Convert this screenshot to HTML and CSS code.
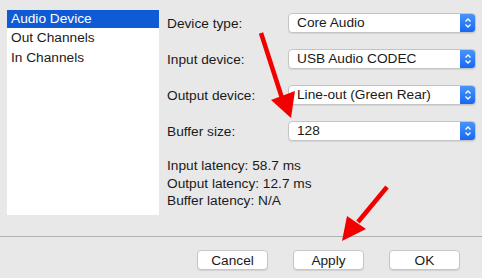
FILE: index.html
```html
<!DOCTYPE html>
<html lang="en">
<head>
    <meta charset="UTF-8">
    <title>Audio Settings</title>
    <link rel="stylesheet" href="styles.css">
</head>
<body>
    <div class="window">
        <div class="main">
            <ul class="side-list">
                <li class="selected">Audio Device</li>
                <li>Out Channels</li>
                <li>In Channels</li>
            </ul>

            <div class="settings">
                <div class="row">
                    <span class="label">Device type:</span>
                    <div class="select"><span class="value">Core Audio</span><span class="stepper"><svg width="8" height="12" viewBox="0 0 8 12"><path d="M1.5 4.5 L4 2 L6.5 4.5 M1.5 7.5 L4 10 L6.5 7.5" fill="none" stroke="#fff" stroke-width="1.3"/></svg></span></div>
                </div>
                <div class="row">
                    <span class="label">Input device:</span>
                    <div class="select"><span class="value">USB Audio CODEC</span><span class="stepper"><svg width="8" height="12" viewBox="0 0 8 12"><path d="M1.5 4.5 L4 2 L6.5 4.5 M1.5 7.5 L4 10 L6.5 7.5" fill="none" stroke="#fff" stroke-width="1.3"/></svg></span></div>
                </div>
                <div class="row">
                    <span class="label">Output device:</span>
                    <div class="select"><span class="value">Line-out (Green Rear)</span><span class="stepper"><svg width="8" height="12" viewBox="0 0 8 12"><path d="M1.5 4.5 L4 2 L6.5 4.5 M1.5 7.5 L4 10 L6.5 7.5" fill="none" stroke="#fff" stroke-width="1.3"/></svg></span></div>
                </div>
                <div class="row">
                    <span class="label">Buffer size:</span>
                    <div class="select"><span class="value">128</span><span class="stepper"><svg width="8" height="12" viewBox="0 0 8 12"><path d="M1.5 4.5 L4 2 L6.5 4.5 M1.5 7.5 L4 10 L6.5 7.5" fill="none" stroke="#fff" stroke-width="1.3"/></svg></span></div>
                </div>

                <div class="latency">
                    <p>Input latency: 58.7 ms</p>
                    <p>Output latency: 12.7 ms</p>
                    <p>Buffer latency: N/A</p>
                </div>
            </div>
        </div>

        <div class="footer">
            <button class="btn">Cancel</button>
            <button class="btn">Apply</button>
            <button class="btn">OK</button>
        </div>

        <!-- annotation arrows drawn over the dialog -->
        <svg class="arrows" width="482" height="278" viewBox="0 0 482 278">
            <line x1="261" y1="33" x2="282" y2="98" stroke="#f20000" stroke-width="4.5"/>
            <polygon points="271,100 295,91 291,118" fill="#f20000"/>
            <line x1="387" y1="187" x2="358" y2="222" stroke="#f20000" stroke-width="4.5"/>
            <polygon points="347,216 366,229 342,241" fill="#f20000"/>
        </svg>
    </div>
</body>
</html>
```

FILE: styles.css
```css
body {
    margin: 0;
    background: #e8e8e8;
    font-family: "Liberation Sans", Arial, sans-serif;
    font-size: 13.7px;
    color: #1a1a1a;
}
.window {
    position: relative;
    width: 482px;
    height: 278px;
}
.main {
    display: flex;
    padding: 10px 6px 0 7px;
    height: 226px;
    box-sizing: border-box;
}
.side-list {
    list-style: none;
    margin: 0;
    padding: 0;
    width: 152px;
    height: 205px;
    background: #fff;
}
.side-list li {
    height: 20px;
    line-height: 20px;
    padding-left: 4px;
}
.side-list li.selected {
    height: 18px;
    line-height: 18px;
    background: #0f5bd6;
    color: #fff;
}
.settings {
    flex: 1;
    padding: 3px 0 0 8px;
}
.row {
    display: flex;
    align-items: center;
    height: 20px;
    margin-bottom: 16px;
}
.row:last-of-type {
    margin-bottom: 13px;
}
.label {
    width: 121px;
}
.select {
    display: flex;
    width: 188px;
    height: 20px;
    box-sizing: border-box;
    border: 1px solid #c4c4c4;
    border-radius: 4px;
    background: #fff;
    box-shadow: 0 1px 1px rgba(0, 0, 0, 0.08);
    overflow: hidden;
}
.value {
    flex: 1;
    padding-left: 8px;
    line-height: 18px;
}
.stepper {
    display: flex;
    align-items: center;
    justify-content: center;
    width: 16px;
    margin: -1px -1px -1px 0;
    background: linear-gradient(#4c97fb, #1466f3);
}
.latency p {
    margin: 0;
    line-height: 17.5px;
}
.footer {
    border-top: 1px solid #b0b0b0;
    margin-top: 10px;
    display: flex;
    justify-content: flex-end;
    gap: 25px;
    padding: 13px 22px 0 0;
}
.btn {
    width: 71px;
    height: 20px;
    padding: 0;
    border: 1px solid #c6c6c6;
    border-radius: 4px;
    background: #fff;
    box-shadow: 0 1px 1px rgba(0, 0, 0, 0.1);
    font-family: "Liberation Sans", Arial, sans-serif;
    font-size: 13.7px;
    color: #1a1a1a;
}
.arrows {
    position: absolute;
    left: 0;
    top: 0;
    pointer-events: none;
}
```
